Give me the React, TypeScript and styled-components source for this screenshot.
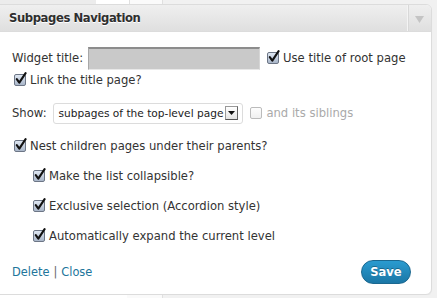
import React from "react";
import styled, { createGlobalStyle } from "styled-components";

const Global = createGlobalStyle`
  html, body { margin: 0; padding: 0; }
  body {
    background: #f1f1f1;
    font-family: "DejaVu Sans", "Liberation Sans", sans-serif;
    font-size: 11.6px;
    color: #333;
    overflow: hidden;
  }
`;

const Page = styled.div`
  width: 437px;
  height: 298px;
  display: flex;
  flex-direction: column;
`;

const Strip = styled.div<{ $h: number; $cols: string }>`
  height: ${(p) => p.$h}px;
  flex: none;
  display: grid;
  grid-template-columns: ${(p) => p.$cols};
`;

const Cell = styled.div<{ $bg: string; $edge?: boolean }>`
  background: ${(p) => p.$bg};
  border-right: ${(p) => (p.$edge ? "1px solid #e0e0e0" : "none")};
`;

const Widget = styled.div`
  flex: none;
  margin-left: -8px;
  width: 438px;
  border: 1px solid #dcdcdc;
  border-radius: 6px;
  background: #fff;
  box-shadow: 0 1px 1px rgba(0, 0, 0, 0.04);
  overflow: hidden;
`;

const Header = styled.div`
  height: 26px;
  display: flex;
  align-items: stretch;
  background: linear-gradient(to bottom, #efefef, #dfdfdf);
  border-bottom: 1px solid #dcdcdc;
`;

const Title = styled.h3`
  flex: 1;
  margin: 0;
  padding-left: 16px;
  display: flex;
  align-items: center;
  font-size: 11.6px;
  letter-spacing: -0.4px;
  font-weight: bold;
  color: #2e2e2e;
  text-shadow: 0 1px 0 #fff;
`;

const Toggle = styled.div`
  width: 23px;
  border-left: 1px solid #f4f4f4;
  box-shadow: inset 1px 0 0 #d8d8d8;
  display: flex;
  align-items: center;
  justify-content: center;
  padding-top: 2px;
`;

const Body = styled.div`
  padding: 14px 0 0 19px;
  display: flex;
  flex-direction: column;
`;

const Row = styled.div<{ $mt?: number; $indent?: number }>`
  display: flex;
  align-items: center;
  margin-top: ${(p) => p.$mt ?? 0}px;
  margin-left: ${(p) => p.$indent ?? 0}px;
  height: 24px;
`;

const Label = styled.span<{ $muted?: boolean }>`
  color: ${(p) => (p.$muted ? "#aaa" : "#333")};
  white-space: nowrap;
`;

const TextInput = styled.div`
  width: 170px;
  height: 20px;
  margin: 0 5px 0 5px;
  background: #c9c9c9;
  border-top: 2px solid #8c8c8c;
  border-left: 1px solid #a8a8a8;
  border-right: 1px solid #d6d6d6;
  border-bottom: 1px solid #e8e8e8;
`;

const Box = styled.span<{ $disabled?: boolean }>`
  position: relative;
  width: 10px;
  height: 10px;
  flex: none;
  margin: 0 4px 0 2px;
  border: 1px solid ${(p) => (p.$disabled ? "#bbb" : "#6d7686")};
  border-radius: 2px;
  background: ${(p) =>
    p.$disabled
      ? "linear-gradient(#fdfdfd, #f0f0f0)"
      : "linear-gradient(#dfe7f2, #a9b6c9)"};
  svg {
    position: absolute;
    left: 0px;
    top: -3px;
  }
`;

const Check = ({ on = true, disabled = false }: { on?: boolean; disabled?: boolean }) => (
  <Box $disabled={disabled}>
    {on && (
      <svg width="12" height="13" viewBox="0 0 12 13">
        <path d="M1.8 7.2 L4.3 10.6 L10.6 1.2" fill="none" stroke="#111" strokeWidth="2.1" strokeLinecap="round" strokeLinejoin="round" />
      </svg>
    )}
  </Box>
);

const Select = styled.div`
  display: flex;
  align-items: center;
  height: 19px;
  margin: 0 5px 0 6px;
  padding: 0 4px 0 5px;
  border: 1px solid #dcdcdc;
  border-radius: 3px;
  background: #fff;
  font-size: 10.6px;
  color: #222;
`;

const Arrow = styled.span`
  width: 11px;
  height: 12px;
  margin-left: 2px;
  border: 1px solid #999;
  border-right-color: #666;
  border-bottom-color: #555;
  background: linear-gradient(#fff, #e4e4e4);
  display: flex;
  align-items: center;
  justify-content: center;
`;

const Footer = styled.div`
  display: flex;
  align-items: center;
  justify-content: space-between;
  padding: 12px 20px 10px 19px;
`;

const Links = styled.div`
  color: #21759b;
  font-size: 11.4px;
`;

const Link = styled.a`
  color: #21759b;
  text-decoration: none;
`;

const Sep = styled.span`
  color: #666;
  margin: 0 4px;
`;

const SaveButton = styled.button`
  width: 50px;
  height: 24px;
  border: 1px solid #1b6890;
  border-radius: 12px;
  background: linear-gradient(to bottom, #2a9bd0, #1b77a6);
  color: #fff;
  font-family: "DejaVu Sans", sans-serif;
  font-weight: bold;
  font-size: 11.5px;
  padding: 0;
  text-shadow: 0 -1px 0 rgba(0, 0, 0, 0.3);
`;

export default function App() {
  return (
    <>
      <Global />
      <Page>
        <Strip $h={4} $cols="96px 34px 33px 1fr">
          <Cell $bg="#ececec" />
          <Cell $bg="#ffffff" $edge />
          <Cell $bg="#fafafa" $edge />
          <Cell $bg="#f1f1f1" />
        </Strip>
        <Widget>
          <Header>
            <Title>Subpages Navigation</Title>
            <Toggle>
              <svg width="9" height="7" viewBox="0 0 9 7">
                <path d="M0 0 H9 L4.5 7 Z" fill="#c4c4c4" />
              </svg>
            </Toggle>
          </Header>
          <Body>
            <Row>
              <Label>Widget title:</Label>
              <TextInput />
              <Check />
              <Label>Use title of root page</Label>
            </Row>
            <Row $mt={-2}>
              <Check />
              <Label>Link the title page?</Label>
            </Row>
            <Row $mt={9}>
              <Label>Show:</Label>
              <Select>
                subpages of the top-level page
                <Arrow>
                  <svg width="7" height="4" viewBox="0 0 7 4">
                    <path d="M0 0 H7 L3.5 4 Z" fill="#111" />
                  </svg>
                </Arrow>
              </Select>
              <Check on={false} disabled />
              <Label $muted>and its siblings</Label>
            </Row>
            <Row $mt={9}>
              <Check />
              <Label>Nest children pages under their parents?</Label>
            </Row>
            <Row $mt={6} $indent={19}>
              <Check />
              <Label>Make the list collapsible?</Label>
            </Row>
            <Row $mt={6} $indent={19}>
              <Check />
              <Label>Exclusive selection (Accordion style)</Label>
            </Row>
            <Row $mt={6} $indent={19}>
              <Check />
              <Label>Automatically expand the current level</Label>
            </Row>
          </Body>
          <Footer>
            <Links>
              <Link href="#">Delete</Link>
              <Sep>|</Sep>
              <Link href="#">Close</Link>
            </Links>
            <SaveButton>Save</SaveButton>
          </Footer>
        </Widget>
        <Strip $h={6} $cols="127px 36px 1fr">
          <Cell $bg="#ffffff" />
          <Cell $bg="#fafafa" $edge />
          <Cell $bg="#f1f1f1" />
        </Strip>
      </Page>
    </>
  );
}
